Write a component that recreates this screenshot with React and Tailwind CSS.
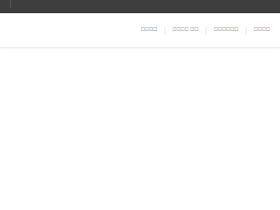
export default function App() {
  const items = ["\uE000\uE001\uE002\uE003", "\uE004\uE005\uE006\uE007 \uE008\uE009", "\uE00A\uE00B\uE00C\uE00D\uE00E\uE00F", "\uE010\uE011\uE012\uE013"];
  return (
    <div className="w-[280px] h-[210px] bg-white" style={{ fontFamily: '"Liberation Sans", sans-serif' }}>
      <div className="h-[13px] bg-[#3e3e3e] border-b border-[#2e2e2e] flex">
        <div className="ml-[10px] w-px h-[8px] bg-[#555]" />
      </div>
      <div className="h-[35px] border-t border-[#e6e6e6] border-b border-b-[#ececec] shadow-[0_1px_2px_rgba(0,0,0,0.05)] flex items-center justify-end pr-[10px] pb-[2px]">
        {items.map((t, i) => (
          <div key={i} className="flex items-center">
            {i > 0 && <span className="mx-[6.5px] text-[8px] leading-none text-[#ddd]">|</span>}
            <span className="text-[5.5px] leading-none text-[#444]">{t}</span>
          </div>
        ))}
      </div>
    </div>
  );
}
